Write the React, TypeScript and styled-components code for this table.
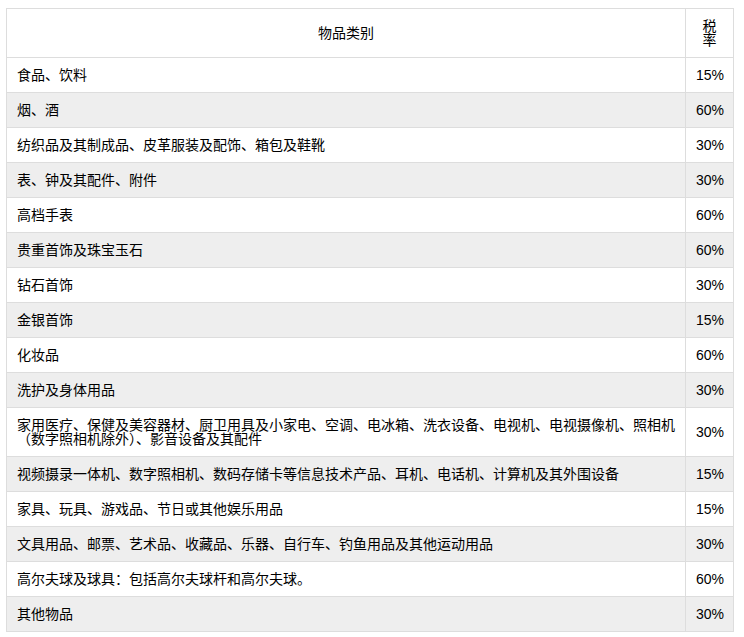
import React from "react";
import styled, { createGlobalStyle } from "styled-components";

const Global = createGlobalStyle`
  html, body { margin: 0; padding: 0; background: #fff; }
  body { padding: 8px 6px; font-family: "Liberation Sans", "Noto Sans CJK SC", sans-serif; }
`;

const Table = styled.table`
  width: 728px;
  border-collapse: collapse;
  font-size: 14px;
  line-height: 14px;
  color: #000;
  table-layout: fixed;
`;

const Th = styled.th<{ $narrow?: boolean }>`
  border: 1px solid #ddd;
  padding: 10px 10px;
  font-weight: normal;
  text-align: center;
  vertical-align: middle;
  width: ${(p) => (p.$narrow ? "27px" : "auto")};
`;

const Row = styled.tr`
  background: #fff;
  &:nth-child(even) { background: #eeeeee; }
`;

const Td = styled.td<{ $rate?: boolean }>`
  border: 1px solid #ddd;
  padding: 10px 10px;
  vertical-align: middle;
  text-align: left;
  white-space: ${(p) => (p.$rate ? "nowrap" : "normal")};
`;

const rows: [string, string][] = [
  ["食品、饮料", "15%"],
  ["烟、酒", "60%"],
  ["纺织品及其制成品、皮革服装及配饰、箱包及鞋靴", "30%"],
  ["表、钟及其配件、附件", "30%"],
  ["高档手表", "60%"],
  ["贵重首饰及珠宝玉石", "60%"],
  ["钻石首饰", "30%"],
  ["金银首饰", "15%"],
  ["化妆品", "60%"],
  ["洗护及身体用品", "30%"],
  ["家用医疗、保健及美容器材、厨卫用具及小家电、空调、电冰箱、洗衣设备、电视机、电视摄像机、照相机（数字照相机除外）、影音设备及其配件", "30%"],
  ["视频摄录一体机、数字照相机、数码存储卡等信息技术产品、耳机、电话机、计算机及其外围设备", "15%"],
  ["家具、玩具、游戏品、节日或其他娱乐用品", "15%"],
  ["文具用品、邮票、艺术品、收藏品、乐器、自行车、钓鱼用品及其他运动用品", "30%"],
  ["高尔夫球及球具：包括高尔夫球杆和高尔夫球。", "60%"],
  ["其他物品", "30%"],
];

export default function App() {
  return (
    <>
      <Global />
      <Table>
        <thead>
          <tr>
            <Th>物品类别</Th>
            <Th $narrow>税率</Th>
          </tr>
        </thead>
        <tbody>
          {rows.map(([name, rate]) => (
            <Row key={name}>
              <Td>{name}</Td>
              <Td $rate>{rate}</Td>
            </Row>
          ))}
        </tbody>
      </Table>
    </>
  );
}
